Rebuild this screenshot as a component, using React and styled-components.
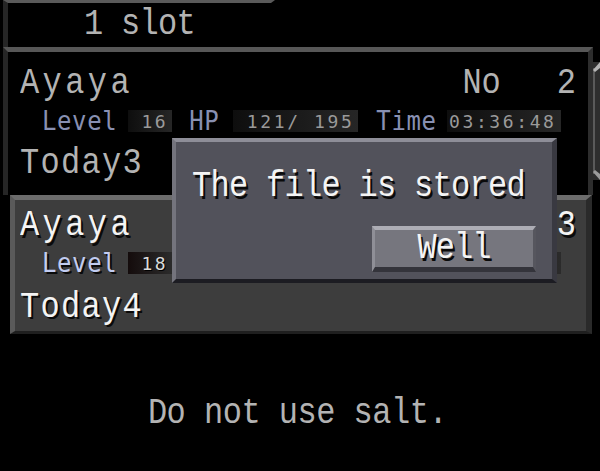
import styled, { createGlobalStyle } from "styled-components";

const GlobalStyle = createGlobalStyle`
  html, body {
    margin: 0;
    padding: 0;
    background: #000;
  }
`;

const Screen = styled.div`
  position: relative;
  width: 600px;
  height: 471px;
  background: #000;
  overflow: hidden;
  display: flex;
  flex-direction: column;
`;

const Header = styled.div`
  box-sizing: border-box;
  width: 272px;
  height: 47px;
  margin-left: 3px;
  border-top: 3px solid #5a5a5a;
  border-left: 5px solid #262626;
  border-right: 4px solid transparent;
  padding-left: 76px;
  display: flex;
  align-items: center;
`;

const Mono = styled.span`
  display: inline-block;
  font-family: "Liberation Mono", "DejaVu Sans Mono", monospace;
  font-size: 32px;
  line-height: 36px;
  letter-spacing: ${(p) => p.$spacing || 0}px;
  color: ${(p) => (p.$bright ? "#f4f4f4" : "#b3b3b3")};
  text-shadow: ${(p) => (p.$bright ? "2px 2px 0 #0a0a0a" : "none")};
  transform: scaleY(1.15);
  white-space: pre;
`;

const SlotRow = styled.div`
  display: flex;
  align-items: flex-start;
  margin-left: 3px;
`;

const Slot = styled.div`
  box-sizing: border-box;
  width: ${(p) => (p.$selected ? 582 : 590)}px;
  height: ${(p) => (p.$selected ? 139 : 148)}px;
  margin-left: ${(p) => (p.$selected ? 10 : 0)}px;
  background: ${(p) => (p.$selected ? "#3d3d3d" : "#000")};
  border-top: 5px solid ${(p) => (p.$selected ? "#6c6c6c" : "#575757")};
  border-left: 5px solid ${(p) => (p.$selected ? "#5a5a5a" : "#262626")};
  border-right: ${(p) => (p.$selected ? "6px solid #2a2a2a" : "5px solid #2d2d2d")};
  border-bottom: ${(p) => (p.$selected ? "3px solid #1f1f1f" : "none")};
  padding: ${(p) => (p.$selected ? "8px 10px 0 5px" : "14px 12px 0 12px")};
`;

const Side = styled.svg`
  display: block;
  margin-top: 15px;
  flex: none;
`;

const NameRow = styled.div`
  display: flex;
  align-items: center;
  height: 36px;
`;

const Spacer = styled.div`
  flex: 1;
`;

const Number = styled(Mono)`
  margin-left: 56px;
`;

const StatRow = styled.div`
  display: flex;
  align-items: center;
  height: 24px;
  margin: 7px 0 0 22px;
`;

const Label = styled.span`
  display: inline-block;
  font-family: "DejaVu Sans Mono", monospace;
  font-size: 24px;
  line-height: 24px;
  letter-spacing: 0.6px;
  color: ${(p) => (p.$bright ? "#c2ccf0" : "#8890b2")};
  text-shadow: ${(p) => (p.$bright ? "2px 2px 0 #0a0a0a" : "none")};
  margin-left: ${(p) => p.$gap || 0}px;
  transform: scaleY(1.12);
`;

const ValueBox = styled.div`
  box-sizing: border-box;
  width: ${(p) => p.$width}px;
  height: 22px;
  margin-left: ${(p) => p.$gap}px;
  padding-right: 4px;
  display: flex;
  align-items: center;
  justify-content: flex-end;
  background: ${(p) =>
    p.$bright
      ? "linear-gradient(90deg, #140c0c, #2b2b2b)"
      : "linear-gradient(90deg, #0e0e0e, #262626)"};
  font-family: "DejaVu Sans Mono", monospace;
  font-size: 18px;
  letter-spacing: 2.6px;
  color: ${(p) => (p.$bright ? "#dcdcdc" : "#9a9a9a")};
  text-shadow: ${(p) => (p.$bright ? "1px 1px 0 #000" : "none")};
  white-space: pre;
`;

const FootRow = styled.div`
  display: flex;
  align-items: center;
  height: 36px;
  margin-top: ${(p) => (p.$selected ? 15 : 13)}px;
`;

const Message = styled.div`
  flex: 1;
  display: flex;
  align-items: center;
  justify-content: center;
  padding: 22px 5px 0 0;
`;

const Dialog = styled.div`
  position: absolute;
  left: 172px;
  top: 138px;
  box-sizing: border-box;
  width: 385px;
  height: 145px;
  background: #52525b;
  border-top: 4px solid #8e8e98;
  border-left: 4px solid #74747d;
  border-right: 5px solid #393941;
  border-bottom: 4px solid #1c1c22;
  padding: 27px 16px 0 16px;
  display: flex;
  flex-direction: column;
`;

const TextLine = styled.div`
  display: flex;
  align-items: center;
  height: 36px;
`;

const Button = styled.div`
  box-sizing: border-box;
  align-self: flex-end;
  width: 164px;
  height: 46px;
  margin-top: 21px;
  background: #76767e;
  border-top: 4px solid #adadb5;
  border-left: 3px solid #8f8f97;
  border-right: 3px solid #56565e;
  border-bottom: 5px solid #34343b;
  display: flex;
  align-items: center;
  justify-content: center;
`;

function SaveSlot({ selected, no, level, hp, time, day }) {
  return (
    <Slot $selected={selected}>
      <NameRow>
        <Mono $bright={selected} $spacing={3.4}>Ayaya</Mono>
        <Spacer />
        <Mono $bright={selected}>No</Mono>
        <Number $bright={selected}>{no}</Number>
      </NameRow>
      <StatRow>
        <Label $bright={selected}>Level</Label>
        <ValueBox $bright={selected} $width={44} $gap={11}>{level}</ValueBox>
        <Label $bright={selected} $gap={17}>HP</Label>
        <ValueBox $bright={selected} $width={125} $gap={14}>{hp}</ValueBox>
        <Label $bright={selected} $gap={18}>Time</Label>
        <ValueBox $bright={selected} $width={114} $gap={10}>{time}</ValueBox>
      </StatRow>
      <FootRow $selected={selected}>
        <Mono $bright={selected} $spacing={1.3}>{day}</Mono>
      </FootRow>
    </Slot>
  );
}

export default function App() {
  return (
    <Screen>
      <GlobalStyle />
      <Header>
        <Mono $spacing={-0.7}>1 slot</Mono>
      </Header>
      <SlotRow>
        <SaveSlot no="2" level="16" hp="121/ 195" time="03:36:48" day="Today3" />
        <Side width="7" height="118" viewBox="0 0 7 118">
          <rect x="0" y="0" width="7" height="118" fill="#2e2e2e" />
          <rect x="0" y="6" width="2" height="106" fill="#5a5a5a" />
          <polygon points="0,8 7,0 7,6 2,10" fill="#b4b4b4" />
          <polygon points="0,110 2,108 7,112 7,118" fill="#9c9c9c" />
        </Side>
      </SlotRow>
      <SaveSlot selected no="3" level="18" hp="140/ 210" time="04:12:05" day="Today4" />
      <Message>
        <Mono $spacing={-0.5}>Do not use salt.</Mono>
      </Message>
      <Dialog>
        <TextLine>
          <Mono $bright $spacing={-0.7}>The file is stored</Mono>
        </TextLine>
        <Button>
          <Mono $bright $spacing={-0.9}>Well</Mono>
        </Button>
      </Dialog>
    </Screen>
  );
}
